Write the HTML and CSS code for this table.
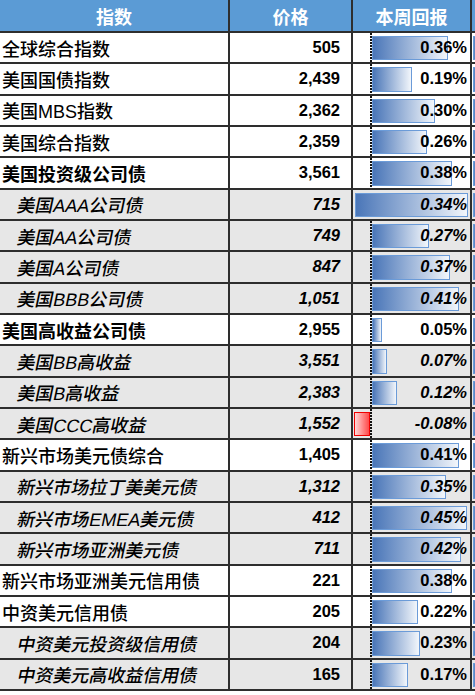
FILE: index.html
```html
<!DOCTYPE html>
<html>
<head>
    <meta charset="utf-8">
    <meta name="viewport" content="width=device-width, initial-scale=1.0">
    <link rel="stylesheet" href="styles.css">
</head>
<body>
<div class="sheet">
    <div class="row head">
        <div class="cell">指数</div>
        <div class="cell">价格</div>
        <div class="cell">本周回报</div>
        <div class="cell"></div>
    </div>

    <div class="row">
        <div class="cell name"><span>全球综合指数</span></div>
        <div class="cell num">505</div>
        <div class="cell ret"><span class="bar" style="width:76px"></span><span class="pct">0.36%</span></div>
        <div class="cell more"><span class="stub"></span></div>
    </div>
    <div class="row">
        <div class="cell name"><span>美国国债指数</span></div>
        <div class="cell num">2,439</div>
        <div class="cell ret"><span class="bar" style="width:40px"></span><span class="pct">0.19%</span></div>
        <div class="cell more"><span class="stub"></span></div>
    </div>
    <div class="row">
        <div class="cell name"><span>美国MBS指数</span></div>
        <div class="cell num">2,362</div>
        <div class="cell ret"><span class="bar" style="width:63px"></span><span class="pct">0.30%</span></div>
        <div class="cell more"><span class="stub"></span></div>
    </div>
    <div class="row">
        <div class="cell name"><span>美国综合指数</span></div>
        <div class="cell num">2,359</div>
        <div class="cell ret"><span class="bar" style="width:55px"></span><span class="pct">0.26%</span></div>
        <div class="cell more"><span class="stub"></span></div>
    </div>
    <div class="row">
        <div class="cell name strong"><span>美国投资级公司债</span></div>
        <div class="cell num">3,561</div>
        <div class="cell ret"><span class="bar" style="width:80px"></span><span class="pct">0.38%</span></div>
        <div class="cell more"><span class="stub"></span></div>
    </div>
    <div class="row sub">
        <div class="cell name"><span>美国AAA公司债</span></div>
        <div class="cell num">715</div>
        <div class="cell ret noaxis"><span class="bar full"></span><span class="pct">0.34%</span></div>
        <div class="cell more"><span class="stub"></span></div>
    </div>
    <div class="row sub">
        <div class="cell name"><span>美国AA公司债</span></div>
        <div class="cell num">749</div>
        <div class="cell ret"><span class="bar" style="width:57px"></span><span class="pct">0.27%</span></div>
        <div class="cell more"><span class="stub"></span></div>
    </div>
    <div class="row sub">
        <div class="cell name"><span>美国A公司债</span></div>
        <div class="cell num">847</div>
        <div class="cell ret"><span class="bar" style="width:78px"></span><span class="pct">0.37%</span></div>
        <div class="cell more"><span class="stub"></span></div>
    </div>
    <div class="row sub">
        <div class="cell name"><span>美国BBB公司债</span></div>
        <div class="cell num">1,051</div>
        <div class="cell ret"><span class="bar" style="width:87px"></span><span class="pct">0.41%</span></div>
        <div class="cell more"><span class="stub"></span></div>
    </div>
    <div class="row">
        <div class="cell name strong"><span>美国高收益公司债</span></div>
        <div class="cell num">2,955</div>
        <div class="cell ret"><span class="bar" style="width:10px"></span><span class="pct">0.05%</span></div>
        <div class="cell more"><span class="stub"></span></div>
    </div>
    <div class="row sub">
        <div class="cell name"><span>美国BB高收益</span></div>
        <div class="cell num">3,551</div>
        <div class="cell ret"><span class="bar" style="width:15px"></span><span class="pct">0.07%</span></div>
        <div class="cell more"><span class="stub"></span></div>
    </div>
    <div class="row sub">
        <div class="cell name"><span>美国B高收益</span></div>
        <div class="cell num">2,383</div>
        <div class="cell ret"><span class="bar" style="width:25px"></span><span class="pct">0.12%</span></div>
        <div class="cell more"><span class="stub"></span></div>
    </div>
    <div class="row sub">
        <div class="cell name"><span>美国CCC高收益</span></div>
        <div class="cell num">1,552</div>
        <div class="cell ret"><span class="bar neg" style="width:16px"></span><span class="pct">-0.08%</span></div>
        <div class="cell more"><span class="stub"></span></div>
    </div>
    <div class="row">
        <div class="cell name"><span>新兴市场美元债综合</span></div>
        <div class="cell num">1,405</div>
        <div class="cell ret"><span class="bar" style="width:87px"></span><span class="pct">0.41%</span></div>
        <div class="cell more"><span class="stub"></span></div>
    </div>
    <div class="row sub">
        <div class="cell name"><span>新兴市场拉丁美美元债</span></div>
        <div class="cell num">1,312</div>
        <div class="cell ret"><span class="bar" style="width:74px"></span><span class="pct">0.35%</span></div>
        <div class="cell more"><span class="stub"></span></div>
    </div>
    <div class="row sub">
        <div class="cell name"><span>新兴市场EMEA美元债</span></div>
        <div class="cell num">412</div>
        <div class="cell ret"><span class="bar" style="width:95px"></span><span class="pct">0.45%</span></div>
        <div class="cell more"><span class="stub"></span></div>
    </div>
    <div class="row sub">
        <div class="cell name"><span>新兴市场亚洲美元债</span></div>
        <div class="cell num">711</div>
        <div class="cell ret"><span class="bar" style="width:89px"></span><span class="pct">0.42%</span></div>
        <div class="cell more"><span class="stub"></span></div>
    </div>
    <div class="row">
        <div class="cell name"><span>新兴市场亚洲美元信用债</span></div>
        <div class="cell num">221</div>
        <div class="cell ret"><span class="bar" style="width:80px"></span><span class="pct">0.38%</span></div>
        <div class="cell more"><span class="stub"></span></div>
    </div>
    <div class="row">
        <div class="cell name"><span>中资美元信用债</span></div>
        <div class="cell num">205</div>
        <div class="cell ret"><span class="bar" style="width:46px"></span><span class="pct">0.22%</span></div>
        <div class="cell more"><span class="stub"></span></div>
    </div>
    <div class="row sub upright">
        <div class="cell name"><span>中资美元投资级信用债</span></div>
        <div class="cell num">204</div>
        <div class="cell ret"><span class="bar" style="width:48px"></span><span class="pct">0.23%</span></div>
        <div class="cell more"><span class="stub"></span></div>
    </div>
    <div class="row sub upright">
        <div class="cell name"><span>中资美元高收益信用债</span></div>
        <div class="cell num">165</div>
        <div class="cell ret"><span class="bar" style="width:36px"></span><span class="pct">0.17%</span></div>
        <div class="cell more"><span class="stub"></span></div>
    </div>
</div>
</body>
</html>
```

FILE: styles.css
```css
html, body {
    margin: 0;
    background: #ffffff;
    overflow: hidden;
}

body {
    width: 475px;
    height: 695px;
    font-family: "Liberation Sans", "Noto Sans CJK SC", sans-serif;
    color: #000;
}

.sheet {
    display: flex;
    flex-direction: column;
    gap: 2px;
    width: 100%;
    padding-bottom: 2px;
    background: #2e2e2e;
}

.row {
    display: grid;
    grid-template-columns: 228px 121px 117px 1fr;
    column-gap: 2px;
    height: 29.33px;
}

.cell {
    display: flex;
    align-items: center;
    background: #ffffff;
    white-space: nowrap;
    overflow: hidden;
}

.head {
    height: 31px;
}

.head .cell {
    justify-content: center;
    background: #5b9bd5;
    color: #ffffff;
    font-size: 18px;
    font-weight: bold;
}

.sub .cell {
    background: #e7e7e7;
}

.name {
    padding-left: 2px;
    font-size: 18px;
    font-weight: 500;
}

.name.strong {
    font-weight: bold;
}

.sub .name {
    padding-left: 18px;
}

.sub .name span {
    display: inline-block;
    transform: skewX(-12deg);
}

.num {
    justify-content: flex-end;
    padding-right: 11px;
    font-size: 16.5px;
    font-weight: bold;
}

.sub .num, .sub .pct {
    font-style: italic;
}

.upright .num, .upright .pct {
    font-style: normal;
}

.ret {
    position: relative;
    justify-content: flex-end;
    padding-right: 3px;
}

.ret::before {
    content: "";
    position: absolute;
    left: 17px;
    top: 0;
    bottom: 0;
    width: 2px;
    background: repeating-linear-gradient(to bottom, #111 0 2px, transparent 2px 3px);
}

.ret.noaxis::before {
    display: none;
}

.bar {
    position: absolute;
    left: 19px;
    top: 3px;
    bottom: 2px;
    box-sizing: border-box;
    border: 1.5px solid #6b9bd8;
    background: linear-gradient(to right, #4a76b8, #f2f6fb);
}

.bar.full {
    left: 2px;
    right: 2px;
}

.bar.neg {
    left: auto;
    right: 100px;
    border-color: #f00000;
    background: linear-gradient(to right, #ffd6d6, #ff4a4a);
}

.pct {
    position: relative;
    font-size: 16.5px;
    font-weight: bold;
}

.more {
    position: relative;
}

.stub {
    position: absolute;
    left: 1px;
    top: 3px;
    bottom: 2px;
    width: 40px;
    box-sizing: border-box;
    border: 1.5px solid #6b9bd8;
    background: #5b87c5;
}
```
